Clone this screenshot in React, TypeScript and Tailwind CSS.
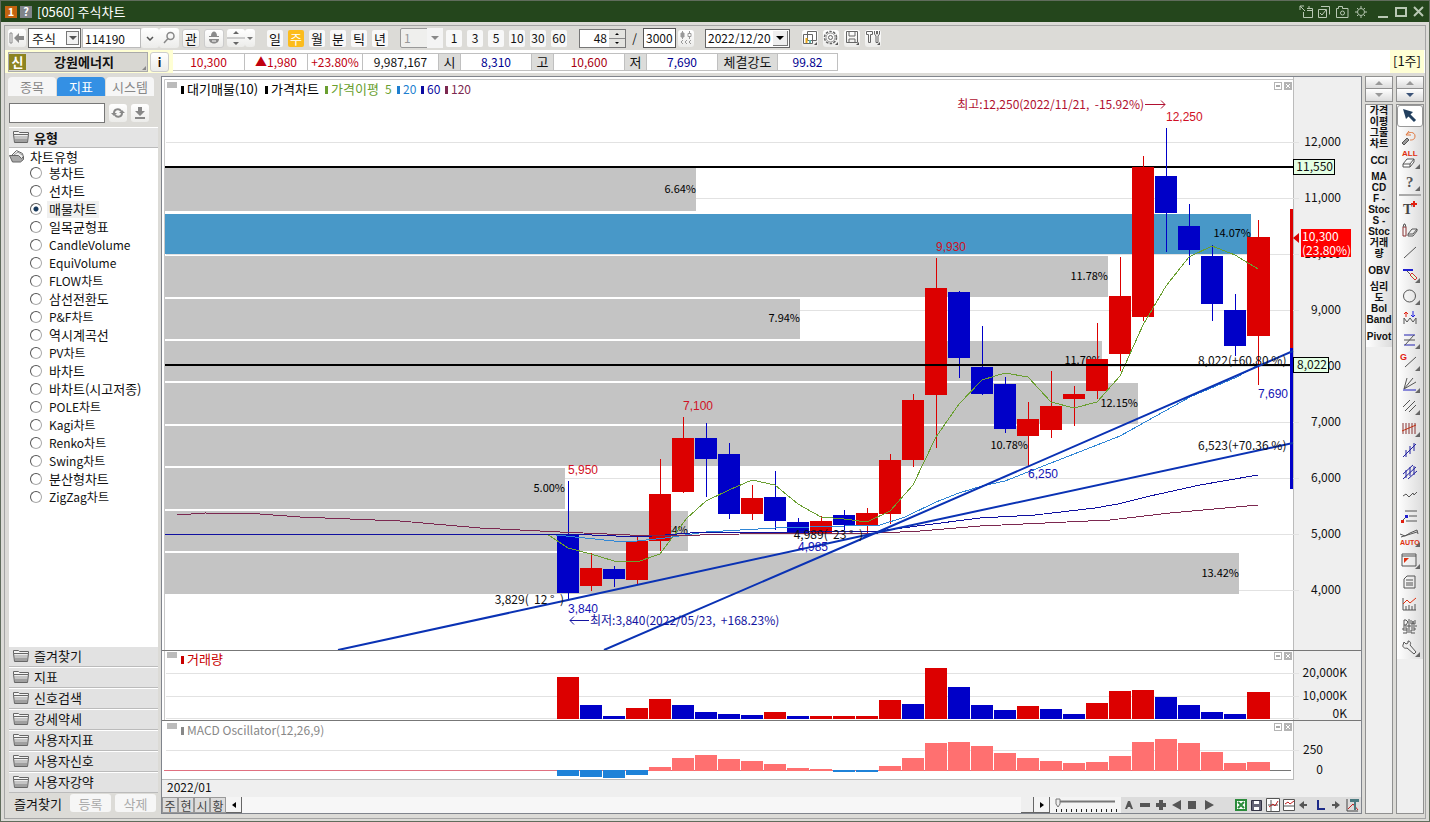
import React, { useState } from 'react';

const RED = '#dc0000';
const BLUE = '#0000c8';

// color, high, body top, body bottom, low, volume color, volume top, macd edge
type Candle = [string, number, number, number, number, string, number, number];

const candles: Candle[] = [
  ['b', 481, 534, 593, 599, 'r', 677, 776],
  ['r', 553, 568, 586, 591, 'b', 705, 777],
  ['b', 566, 569, 579, 587, 'b', 716, 778],
  ['r', 537, 541, 580, 585, 'r', 708, 775],
  ['r', 459, 494, 541, 551, 'r', 699, 767],
  ['r', 417, 438, 492, 493, 'b', 705, 758],
  ['b', 423, 438, 459, 497, 'b', 712, 755],
  ['b', 443, 454, 514, 519, 'b', 714, 759],
  ['r', 485, 498, 514, 520, 'b', 715, 761],
  ['b', 471, 497, 521, 530, 'r', 712, 764],
  ['b', 518, 522, 533, 533, 'b', 716, 768],
  ['r', 516, 521, 533, 533, 'r', 716, 769],
  ['b', 510, 515, 525, 530, 'r', 716, 772],
  ['r', 508, 513, 525, 534, 'r', 716, 772],
  ['r', 454, 460, 514, 524, 'r', 700, 766],
  ['r', 394, 400, 460, 467, 'b', 704, 758],
  ['r', 258, 288, 395, 448, 'r', 668, 743],
  ['b', 291, 292, 358, 378, 'b', 687, 742],
  ['b', 326, 367, 394, 395, 'b', 705, 746],
  ['b', 377, 384, 429, 433, 'b', 710, 753],
  ['r', 402, 419, 436, 466, 'r', 706, 758],
  ['r', 371, 406, 430, 438, 'b', 709, 761],
  ['r', 386, 394, 399, 426, 'b', 714, 763],
  ['r', 323, 359, 391, 399, 'r', 703, 762],
  ['r', 257, 296, 354, 371, 'r', 691, 756],
  ['r', 156, 167, 317, 321, 'r', 690, 742],
  ['b', 128, 176, 213, 252, 'b', 697, 739],
  ['b', 204, 226, 250, 265, 'b', 705, 743],
  ['b', 245, 256, 304, 321, 'b', 712, 752],
  ['b', 294, 310, 346, 356, 'b', 714, 763],
  ['r', 220, 237, 336, 385, 'r', 692, 762],
];

const profile: [number, number, number, string][] = [
  [168, 211, 696, '6.64%'],
  [214, 254, 1251, '14.07%'],
  [256, 297, 1108, '11.78%'],
  [299, 339, 800, '7.94%'],
  [341, 381, 1102, '11.70%'],
  [383, 424, 1138, '12.15%'],
  [426, 466, 1028, '10.78%'],
  [468, 509, 565, '5.00%'],
  [511, 551, 688, '6.54%'],
  [553, 594, 1239, '13.42%'],
];

const averages = [
  {
    color: '#6a9f30',
    points:
      '547,534 568,548 591,554 614,561 637,562 660,554 687,518 706,501 729,490 752,480 775,485 798,504 821,517 844,519 867,522 890,511 913,485 936,437 959,404 982,380 1005,373 1028,377 1051,402 1074,408 1097,402 1120,376 1143,325 1166,286 1189,257 1212,246 1235,255 1258,269',
  },
  {
    color: '#2f86d6',
    points:
      '547,534 575,537 614,541 637,541 665,538 706,532 775,528 845,526 880,525 905,517 936,502 959,493 982,486 1005,481 1028,472 1120,436 1147,421 1190,397 1237,377 1258,365',
  },
  {
    color: '#1010a0',
    points:
      '165,534 568,534 640,537 690,533 798,532 880,531 925,525 980,518 1035,515 1095,508 1118,504 1150,496 1200,485 1258,475',
  },
  {
    color: '#7c2850',
    points:
      '177,515 205,513 260,514 300,517 400,521 480,528 560,532 630,535 700,535 740,534 880,533 920,531 980,526 1110,520 1170,513 1258,505',
  },
];

const chartTypes = [
  '봉차트', '선차트', '매물차트', '일목균형표', 'CandleVolume', 'EquiVolume', 'FLOW차트',
  '삼선전환도', 'P&F차트', '역시계곡선', 'PV차트', '바차트', '바차트(시고저종)', 'POLE차트',
  'Kagi차트', 'Renko차트', 'Swing차트', '분산형차트', 'ZigZag차트',
];

const folders = ['즐겨찾기', '지표', '신호검색', '강세약세', '사용자지표', '사용자신호', '사용자강약'];

const indicators = [
  ['가격', '이평'], ['그물', '차트'], ['CCI'], ['MA', 'CD'], ['F -', 'Stoc'], ['S -', 'Stoc'],
  ['거래', '량'], ['OBV'], ['심리', '도'], ['Bol', 'Band'], ['Pivot'],
];

const fill = (c: string) => (c === 'r' ? RED : BLUE);
const barX = (i: number) => 557 + i * 23;
const barW = (i: number) => (i === candles.length - 1 ? 23 : 22);

const btn = 'flex items-center justify-center rounded-[3px] bg-gradient-to-b from-white to-[#ececea] shrink-0';

function Pane({ top, height, className, controls = 'top-[2px]', children }: {
  top: number; height: number; className: string; controls?: string; children: React.ReactNode;
}) {
  return (
    <div className="relative">
      <svg
        viewBox={`162 ${top} 1199 ${height}`}
        preserveAspectRatio="xMaxYMid slice"
        className={`block w-full ${className}`}
        fontSize="12"
      >
        <rect x="162" y={top} width="1132" height={height} fill="#fff" />
        <rect x="1294" y={top} width="67" height={height} fill="#efefef" />
        <path d={`M1293.5 ${top}v${height}`} stroke="#bbb" />
        {children}
      </svg>
      <div className={`absolute right-[69px] flex gap-[2px] ${controls}`}>
        <button aria-label="최대화" className="flex h-2 w-2 items-center justify-center border border-[#b4b4b4]">
          <span className="h-[2px] w-1 bg-[#aaa]" />
        </button>
        <button aria-label="닫기" className="h-2 w-2 bg-[#b4b4b4]">
          <svg viewBox="0 0 8 8" className="h-2 w-2"><path d="M2 2l4 4M6 2L2 6" stroke="#fff" /></svg>
        </button>
      </div>
    </div>
  );
}

function Legend({ x, y, color, text, size = 13 }: { x: number; y: number; color: string; text: string; size?: number }) {
  return (
    <>
      <rect x={x + 1} y={y - 7} width="3" height="8" fill={color} shapeRendering="crispEdges" />
      <text x={x + 7} y={y + 1} fill={color} fontSize={size}>{text}</text>
    </>
  );
}

function AxisLabel({ y, text, x = 1341 }: { y: number; text: string; x?: number }) {
  return <text x={x} y={y + 4} textAnchor="end" fill="#111">{text}</text>;
}

function PricePane() {
  return (
    <Pane top={77} height={573} className="h-[573px]" controls="top-[5px]">
      <path d="M164.5 650V79.500H1293" stroke="#c8c8c8" fill="none" />
      <rect x="167" y="82" width="10" height="6" fill="#bbb" />
      {[12, 11, 10, 9, 8, 7, 6, 5, 4].map((k) => {
        const y = 142 + (12 - k) * 56;
        return (
          <g key={k}>
            <path d={`M166 ${y + 0.5}H1299`} stroke="#e2e2e2" />
            <AxisLabel y={y} text={`${k},000`} />
          </g>
        );
      })}
      <g shapeRendering="crispEdges">
        {profile.map(([y, bottom, right, label]) => (
          <g key={y}>
            <rect x="165" y={y} width={right - 165} height={bottom - y} fill={y === 214 ? '#4898c8' : '#c4c4c4'} />
            <text x={right} y={Math.round((y + bottom) / 2) + 3} textAnchor="end" fill="#000" fontSize="11">{label}</text>
          </g>
        ))}
        <rect x="165" y="166" width="1128" height="2" fill="#000" />
        {candles.map(([c, high, top, bottom, low], i) => (
          <g key={i} fill={fill(c)}>
            <rect x={barX(i) + 11} y={high} width="1" height={low - high} />
            <rect x={barX(i)} y={top} width={barW(i)} height={bottom - top} />
          </g>
        ))}
        {averages.map((a) => (
          <polyline key={a.color} points={a.points} fill="none" stroke={a.color} />
        ))}
        <rect x="165" y="364" width="1128" height="2" fill="#000" />
        <rect x="1290" y="209" width="3" height="139" fill={RED} />
        <rect x="1290" y="348" width="3" height="141" fill={BLUE} />
      </g>
      <path d="M338 650L568 600L880 532L1293 443M604 650L880 531L1293 351" stroke="#0a32b4" strokeWidth="2" fill="none" />

      <g fill="#111">
        <text x="564" y="604" textAnchor="end">{'3,829(\u00a0 12 ° \u00a0)'}</text>
        <text x="863" y="539" textAnchor="end">{'4,989(\u00a0 23 ° \u00a0)'}</text>
        <text x="1198" y="365">8,022(+60.80 %)</text>
        <text x="1198" y="450">6,523(+70.36 %)</text>
      </g>
      <g fontFamily="Liberation Sans, sans-serif">
        <g fill="#d01024">
          <text x="1166" y="121">12,250</text>
          <text x="936" y="251">9,930</text>
          <text x="683" y="410">7,100</text>
          <text x="568" y="474">5,950</text>
        </g>
        <g fill="#1414b4">
          <text x="568" y="613">3,840</text>
          <text x="798" y="551">4,985</text>
          <text x="1028" y="478">6,250</text>
          <text x="1258" y="398">7,690</text>
        </g>
      </g>
      <text x="1144" y="109" textAnchor="end" fill="#b01030">최고:12,250(2022/11/21,&nbsp; -15.92%)</text>
      <path d="M1145 104.500h20m-4-4l4 4l-4 4" stroke="#b01030" fill="none" />
      <text x="590" y="625" fill="#1414a0">최저:3,840(2022/05/23,&nbsp; +168.23%)</text>
      <path d="M589 620.500h-19m4-4l-4 4l4 4" stroke="#1414a0" fill="none" />

      <Legend x={180} y={93} color="#000" text="대기매물(10)" />
      <Legend x={264} y={93} color="#000" text="가격차트" />
      <Legend x={324} y={93} color="#6a9f30" text="가격이평" />
      <text x="385" y="94" fill="#6a9f30">5</text>
      <Legend x={396} y={93} color="#1e7fd0" text="20" size={12} />
      <Legend x={420} y={93} color="#0a0aa0" text="60" size={12} />
      <Legend x={444} y={93} color="#7c2850" text="120" size={12} />

      <rect x="1293.500" y="159.500" width="41" height="15" fill="#e4ffe4" stroke="#000" />
      <AxisLabel x={1333} y={167} text="11,550" />
      <rect x="1293.500" y="357.500" width="35" height="15" fill="#e4ffe4" stroke="#000" />
      <AxisLabel x={1327} y={365} text="8,022" />
      <path d="M1293 238l6-5v10z" fill={RED} />
      <rect x="1301" y="229" width="50" height="28" fill="#f00" />
      <g fill="#fff">
        <text x="1302" y="241">10,300</text>
        <text x="1302" y="255">(23.80%)</text>
      </g>
    </Pane>
  );
}

function VolumePane() {
  return (
    <Pane top={650} height={70} className="h-[70px]">
      <path d="M162 650.500H1361" stroke="#777" />
      <path d="M166 673.500H1299M166 696.500H1299M166 718.500H1299" stroke="#e2e2e2" />
      <path d="M164.500 651V720" stroke="#c8c8c8" />
      <rect x="167" y="652" width="10" height="6" fill="#bbb" />
      <Legend x={180} y={663} color="#c80000" text="거래량" />
      <g shapeRendering="crispEdges">
        {candles.map((c, i) => (
          <rect key={i} x={barX(i)} y={c[6]} width={barW(i)} height={719 - c[6]} fill={fill(c[5])} />
        ))}
      </g>
      <AxisLabel x={1347} y={673} text="20,000K" />
      <AxisLabel x={1347} y={696} text="10,000K" />
      <AxisLabel x={1347} y={714} text="0K" />
    </Pane>
  );
}

function MacdPane() {
  return (
    <Pane top={720} height={60} className="h-[60px]" controls="top-[3px]">
      <path d="M162 720.500H1361" stroke="#777" />
      <path d="M166 750.500H1299" stroke="#e2e2e2" />
      <path d="M162 779.500H1294" stroke="#bbb" />
      <path d="M164 770.500H1270" stroke="#e07080" />
      <path d="M1270 770.500H1291" stroke="#777" />
      <rect x="167" y="723" width="10" height="6" fill="#bbb" />
      <Legend x={180} y={734} color="#888" text="MACD Oscillator(12,26,9)" size={12} />
      <g shapeRendering="crispEdges">
        {candles.map((c, i) => {
          const down = c[7] > 770;
          return (
            <rect
              key={i}
              x={barX(i)}
              y={down ? 770 : c[7]}
              width={barW(i)}
              height={down ? c[7] - 770 : 771 - c[7]}
              fill={down ? '#1e82d8' : '#ff7070'}
            />
          );
        })}
      </g>
      <AxisLabel x={1323} y={750} text="250" />
      <AxisLabel x={1323} y={770} text="0" />
    </Pane>
  );
}

function Folder({ open = false }: { open?: boolean }) {
  return (
    <svg viewBox="0 0 16 14" className="h-[14px] w-4 shrink-0" stroke="#666">
      {open ? (
        <>
          <path d="M2.500 6.500l5-5l6 3l1 4l-4 4h-7z" fill="#eee" />
          <path d="M5 6l4-3l4 3" fill="none" stroke="#999" />
          <path d="M.5 6.500h9l3 3l2-2v3l-3 2.500h-8z" fill="#a8a8a8" />
        </>
      ) : (
        <>
          <path d="M.5 4.500v-3h5l1 1h9v2" fill="#f4f4f4" />
          <path d="M.5 4.500h15l-1 8h-13z" fill="#c4c4c4" />
          <path d="M2 10.500h12" stroke="#a0a0a0" strokeWidth="3" />
          <path d="M1.500 5.500h13" stroke="#eee" />
        </>
      )}
    </svg>
  );
}

// drawing tools of the right strip, 22 x 20 each; m = has a sub menu
const tools: { name: string; m?: boolean; art: React.ReactNode }[] = [
  { name: '선택', art: <><path d="M8 7l8 8" stroke="#23405f" strokeWidth="3" /><path d="M4 3l10 3l-7 7z" fill="#23405f" stroke="none" /></> },
  { name: '되돌리기', art: <><path d="M3 15l5-5l2 2l-5 5z" fill="#999" /><path d="M7 7l3-4M7 7h5M7 7c3-4 9-3 9 1s-3 4-5 4" stroke="#e07840" /></> },
  { name: '전체지우기', m: true, art: <><text x="3" y="6" fontSize="8" fontWeight="700" fontFamily="Liberation Sans" fill="#e03010" stroke="none">ALL</text><path d="M4 14l4-5h7l-4 5zM4 14v3h7l4-5v-3M11 14v3" fill="#fff" /></> },
  { name: '도움말', m: true, art: <text x="7" y="15" fontSize="15" fontWeight="700" fontFamily="Liberation Serif" fill="#555" stroke="none">?</text> },
  { name: '텍스트', art: <><text x="4" y="16" fontSize="14" fontWeight="700" fontFamily="Liberation Serif" fill="#444" stroke="none">T</text><path d="M15 3v6M12 6h6" stroke="#e02010" strokeWidth="2" /></> },
  { name: '펜지우개', art: <><path d="M4 7h3v9H4z" stroke="#833" /><path d="M4 7l1-3h1l1 3" /><path d="M9 14l4-5h5l-4 5zM9 14v2h5l4-5v-2" fill="#eee" /></> },
  { name: '추세선', art: <path d="M5 16L17 5" /> },
  { name: '선편집', m: true, art: <><path d="M4 6h10" stroke="#2020d0" strokeWidth="2" /><path d="M8 7l4 4" /><path d="M11 11l5 5l2-2l-5-5z" fill="#dfd" stroke="#d03030" /></> },
  { name: '원', m: true, art: <circle cx="10.500" cy="10" r="6" /> },
  { name: '신호', art: <><path d="M5 16v-6l3 4l3-4l3 4l3-4v6" /><path d="M7 9V4M5 6l2-2l2 2" stroke="#e02010" /><path d="M14 3v6M12 7l2 2l2-2" stroke="#2020e0" /></> },
  { name: '파동', m: true, art: <><path d="M5 5h11M5 15h11" stroke="#2020b0" /><path d="M15 5L6 15M5 10h11" /></> },
  { name: '각도', m: true, art: <><text x="1" y="8" fontSize="9" fontWeight="700" fontFamily="Liberation Sans" fill="#e02010" stroke="none">G</text><path d="M6 15L17 5" /></> },
  { name: '팬', m: true, art: <><path d="M5 15L8 4M5 15L14 4M5 15l12-7" /><path d="M4 16h13" stroke="#2020c0" /></> },
  { name: '평행선', m: true, art: <path d="M4 11l7-7M6 15L16 5M10 16l7-7" /> },
  { name: '피보나치', m: true, art: <><path d="M4 5v11M7 5v11M10 5v11M13 5v11M16 5v11" stroke="#833" /><path d="M3 13l14-6" stroke="#c03010" /></> },
  { name: '채널', art: <path d="M4 17L17 4M7 10v7M11 6v8M15 3v8" stroke="#2020a0" /> },
  { name: '이중채널', art: <path d="M4 12L14 3M4 17L17 5M9 17l9-8M7 8v8M11 5v9M15 4v9" stroke="#2020a0" /> },
  { name: '지그재그', art: <path d="M4 12l3-2l3 3l4-4l1 2l3-3" /> },
  { name: '가격선', art: <><path d="M6 5h12M10 10h8M7 15h11M3 15l5-5" /><path d="M2 14h3v3H2z" fill="#e02010" stroke="none" /><path d="M6 9h3v3H6z" fill="#2020d0" stroke="none" /></> },
  { name: '자동추세', m: true, art: <><path d="M1 6l5 2l5-3l7-3l1 4M2 9l16-5" /><text x="1" y="17" fontSize="7" fontWeight="700" fontFamily="Liberation Sans" fill="#e03010" stroke="none">AUTO</text></> },
  { name: '화면', m: true, art: <><path d="M3 4h14v12H3zM3 6h14" /><path d="M5 8h5l-5 5z" fill="#e03010" stroke="none" /></> },
  { name: '메모', art: <path d="M8 4h8v12H5V7zM7 8h7M7 11h7M7 13h7" /> },
  { name: '통계', art: <><path d="M4 4v12h13M7 16v-4M10 16v-5M13 16v-4M16 16v-6" /><path d="M4 10l4-4l3 3l6-5" stroke="#e03010" /></> },
  { name: '일주월', art: <path d="M5 4h2l2 2l-2 3H5zM12 4v4h2V5v3h2V4M4 12h4v5M4 12v2h4M4 17h4M12 12h4v2h-4v3h4M4 10h14M10 3v14" /> },
  { name: '설정', m: true, art: <path d="M5 4l2 2l2-1v-2c3 0 3 3 2 4l6 7l-2 2l-7-6c-2 1-5-1-4-3z" fill="#eee" /> },
];

function ToolIcon({ tool, active }: { tool: (typeof tools)[number]; active?: boolean }) {
  return (
    <button
      aria-label={tool.name}
      className={`flex h-[22px] w-full shrink-0 items-center justify-center ${active ? 'rounded-[3px] border border-[#999] bg-white' : ''}`}
    >
      <svg viewBox="0 0 22 20" className="h-5 w-[22px] shrink-0" stroke="#555" fill="none">
        {tool.art}
        {tool.m && <path d="M21 14v5h-5z" fill="#666" stroke="none" />}
      </svg>
    </button>
  );
}

function Pager({ blue }: { blue?: boolean }) {
  return (
    <div className="mb-[2px] flex flex-col border border-[#909090] bg-[#f4f4f4]">
      <button aria-label="위로" className="flex h-3 items-center justify-center border-b border-[#909090] bg-gradient-to-b from-white to-[#dcdcdc]">
        <svg viewBox="0 0 8 4" className="h-1 w-2"><path d="M0 4l4-4l4 4z" fill="#999" /></svg>
      </button>
      <button aria-label="아래로" className="flex h-3 items-center justify-center bg-gradient-to-b from-white to-[#dcdcdc]">
        <svg viewBox="0 0 8 4" className="h-1 w-2"><path d="M0 0l4 4l4-4z" fill={blue ? '#3c5478' : '#999'} /></svg>
      </button>
    </div>
  );
}

function TitleBar() {
  return (
    <header className="flex h-[21px] shrink-0 items-center bg-[#24461c] px-1 text-white">
      <span className="mr-[3px] flex h-3 w-3 items-center justify-center bg-[#c46410] text-[11px] font-bold">1</span>
      <span className="mr-[5px] flex h-3 w-3 items-center justify-center bg-[#80848a] text-[11px] font-bold">?</span>
      <h1 className="flex-1 pb-px text-[13px]">[0560] 주식차트</h1>
      <svg viewBox="0 0 126 14" className="h-[14px] w-[126px]" fill="none" stroke="#b9c8b4">
        <path d="M1 1l5 5M1 5V1h4M4.500 7v5.500h9v-9H8M8 5.500h5M10 1v3" />
        <path d="M22 1.500h8.500v8M19.500 4.500h8v8h-8zM21 8l2 2l4-5" />
        <path d="M37.500 3.500h2v-2h4v2h5.500v9h-11.500z" /><circle cx="43.500" cy="8" r="2" />
        <circle cx="62" cy="7" r="3.500" /><path d="M62 1v2M62 11v2M56 7h2M66 7h2M58 3l1 1M65 10l1 1M66 3l-1 1M58 11l1-1" />
        <path d="M79 12h10" strokeWidth="2" />
        <path d="M97 3h10v8H97z" strokeWidth="2" />
        <path d="M115 2l9 9M124 2l-9 9" strokeWidth="2" />
      </svg>
    </header>
  );
}

function Toolbar() {
  const [period, setPeriod] = useState('주');
  return (
    <div className="flex h-6 shrink-0 items-center pl-[3px] text-[12px]">
      <button aria-label="처음" className={`${btn} h-[18px] w-[18px]`}>
        <svg viewBox="0 0 16 12" className="h-3 w-4" fill="#8a8a8a"><path d="M1 1h2v10H1z" fill="#fff" stroke="#8a8a8a" /><path d="M5 6l5-5v3h5v4h-5v3z" /></svg>
      </button>
      <div className="relative ml-[2px]">
        <select aria-label="종류" className="block h-5 w-[53px] appearance-none border border-[#666] bg-white pl-[3px] text-[13px] leading-none">
          <option>주식</option>
        </select>
        <span className="pointer-events-none absolute top-[3px] right-[2px] flex h-[14px] w-[13px] items-center justify-center border border-[#777] bg-[#f2f2f2]">
          <svg viewBox="0 0 8 4" className="h-1 w-2"><path d="M0 0l4 4l4-4z" fill="#555" /></svg>
        </span>
      </div>
      <input aria-label="종목코드" defaultValue="114190" className="ml-px h-5 w-[59px] border border-[#bbb] bg-white px-[2px]" />
      <button aria-label="목록" className={`${btn} h-5 w-[18px]`}>
        <svg viewBox="0 0 8 5" className="h-[5px] w-2" fill="none" stroke="#555" strokeWidth="1.500"><path d="M1 1l3 3l3-3" /></svg>
      </button>
      <button aria-label="검색" className={`${btn} h-5 w-5`}>
        <svg viewBox="0 0 14 14" className="h-[14px] w-[14px]" fill="none" stroke="#888" strokeWidth="1.500"><circle cx="8.500" cy="5" r="3.500" /><path d="M6 7.500L2 12" /></svg>
      </button>
      <button className={`${btn} ml-[3px] h-[19px] w-[18px] border border-[#ccc] text-[13px]`}>관</button>
      <button aria-label="관심" className={`${btn} ml-1 h-[19px] w-5 border border-[#ccc]`}>
        <svg viewBox="0 0 14 14" className="h-[14px] w-[14px]" fill="#8a8a8a"><path d="M4 5c0-6 6-6 6 0h2v1H2V5zM2 8h10c0 6-10 6-10 0z" /><path d="M5 10h4" stroke="#fff" /></svg>
      </button>
      <button aria-label="이전 다음" className={`${btn} ml-[3px] h-[18px] w-[18px]`}>
        <svg viewBox="0 0 18 16" className="h-4 w-[18px]" fill="#666"><path d="M6 4l3-3l3 3zM6 12l3 3l3-3z" /><path d="M0 8h18" stroke="#ccc" strokeWidth="2" /></svg>
      </button>
      <button aria-label="더보기" className={`${btn} h-[18px] w-[10px]`}>
        <svg viewBox="0 0 6 3" className="h-[3px] w-[6px]"><path d="M0 0l3 3l3-3z" fill="#777" /></svg>
      </button>
      <div className="ml-3 flex gap-[5px]">
        {['일', '주', '월', '분', '틱', '년'].map((p) => (
          <button
            key={p}
            onClick={() => setPeriod(p)}
            className={`flex h-[17px] w-4 shrink-0 items-center justify-center rounded-[2px] text-[13px] ${p === period ? 'bg-[#fcbc1c] text-white' : 'bg-[#f8f8f8]'}`}
          >
            {p}
          </button>
        ))}
      </div>
      <div className="relative ml-[12px]">
        <select aria-label="분 단위" disabled className="block h-5 w-[43px] appearance-none rounded-[2px] border border-[#999] bg-[#efefed] pl-[3px] text-[12px] text-[#999]">
          <option>1</option>
        </select>
        <span className="pointer-events-none absolute top-0 right-0 flex h-5 w-4 items-center justify-center bg-[#f4f4f4]">
          <svg viewBox="0 0 8 4" className="h-1 w-2"><path d="M0 0l4 4l4-4z" fill="#888" /></svg>
        </span>
      </div>
      <div className="ml-[3px] flex gap-[5px]">
        {['1', '3', '5', '10', '30', '60'].map((n) => (
          <button key={n} className="h-[17px] w-4 shrink-0 rounded-[2px] bg-[#f8f8f8] pb-px">{n}</button>
        ))}
      </div>
      <div className="ml-3 flex h-[19px] w-[47px] border border-[#777] bg-white">
        <input aria-label="표시 개수" defaultValue="48" className="w-[29px] min-w-0 pr-[2px] pb-px text-right" />
        <div className="flex flex-1 flex-col bg-[#e4e4e0]">
          <button aria-label="증가" className="flex flex-1 items-center justify-center border-b border-[#888]"><svg viewBox="0 0 4 2" className="h-[2px] w-1"><path d="M0 2l2-2l2 2z" /></svg></button>
          <button aria-label="감소" className="flex flex-1 items-center justify-center"><svg viewBox="0 0 4 2" className="h-[2px] w-1"><path d="M0 0l2 2l2-2z" /></svg></button>
        </div>
      </div>
      <span className="w-[17px] text-center">/</span>
      <input aria-label="전체 개수" defaultValue="3000" className="h-5 w-[33px] border border-[#555] bg-white pb-px pl-[2px]" />
      <button aria-label="추가 조회" className={`${btn} ml-[2px] h-[17px] w-4`}>
        <svg viewBox="0 0 14 14" className="h-[14px] w-[14px]" fill="none" stroke="#999"><path d="M3.500 0v8M10.500 0v8M4 9l-2 2l2 2M8 9l-2 2l2 2M12 9l-2 2l2 2" /><path d="M2 2h3v4H2z" fill="#999" /><path d="M9 2.500h3v3H9z" fill="#fff" /></svg>
      </button>
      <div className="relative ml-[11px]">
        <select aria-label="날짜" className="block h-[19px] w-[85px] appearance-none border border-[#666] bg-white pb-px pl-[2px]">
          <option>2022/12/20</option>
        </select>
        <span className="pointer-events-none absolute top-[2px] right-[2px] flex h-[15px] w-[15px] items-center justify-center border-r border-b border-[#777] bg-[#efefef]">
          <svg viewBox="0 0 8 4" className="h-1 w-2"><path d="M0 0l4 4l4-4z" /></svg>
        </span>
      </div>
      <div className="ml-3 flex gap-[5px]">
        <button aria-label="차트 추가" className={`${btn} h-[17px] w-4`}>
          <svg viewBox="0 0 16 16" className="h-4 w-4" fill="#fff" stroke="#666"><path d="M5.500 1.500h9v9h-9zM1.500 4.500h9v9h-9z" /><path d="M4.500 13V8" stroke="#e8a818" strokeWidth="2" /><path d="M8 13V10" stroke="#60b8b0" strokeWidth="2" /><path d="M15 12v3h-3z" fill="#555" stroke="none" /></svg>
        </button>
        <button aria-label="환경설정" className={`${btn} h-[17px] w-4`}>
          <svg viewBox="0 0 16 16" className="h-4 w-4" fill="none" stroke="#666"><circle cx="7.500" cy="7.500" r="6" strokeWidth="1.500" strokeDasharray="2.500 1.270" /><circle cx="7.500" cy="7.500" r="4.500" stroke="#999" /><circle cx="7.500" cy="7.500" r="2" /><path d="M15 12v3h-3z" fill="#555" stroke="none" /></svg>
        </button>
        <button aria-label="저장" className={`${btn} h-[17px] w-4`}>
          <svg viewBox="0 0 16 16" className="h-4 w-4" fill="none" stroke="#666"><path d="M2.500 1.500h11v11h-11zM5 2v4h6V2M5 13V9h6v4" /><path d="M15 12v3h-3z" fill="#555" stroke="none" /></svg>
        </button>
        <button aria-label="도구" className={`${btn} h-[17px] w-4`}>
          <svg viewBox="0 0 16 16" className="h-4 w-4" fill="none" stroke="#666"><path d="M1.500 1.500h6v3h-2v8h-2v-8h-2zM9.500 1v3l1.500 2v6.500h2V6l1.500-2V1M11.500 1v3h1V1" /><path d="M15 12v3h-3z" fill="#555" stroke="none" /></svg>
        </button>
      </div>
    </div>
  );
}

function Cell({ w, cls = '', head, children }: { w: string; cls?: string; head?: boolean; children: React.ReactNode }) {
  return (
    <div className={`flex h-[18px] shrink-0 items-center justify-center border border-l-0 border-[#c0c0c0] ${w} ${head ? 'bg-[#dcdcda] text-[13px]' : 'bg-white'} ${cls}`}>
      {children}
    </div>
  );
}

function QuoteRow() {
  return (
    <div className="flex h-[23px] shrink-0 items-center bg-white text-[12px]">
      <div className="flex h-full items-center gap-[2px] bg-[#ffffd4] pl-[3px] pr-[4px]">
        <button className="flex h-5 w-[140px] items-center border border-[#aaa] bg-[#d8d7d2]">
          <span className="flex h-4 w-[17px] items-center justify-center bg-[#8c8420] text-[13px] font-bold text-white">신</span>
          <span className="flex-1 text-center text-[13px] font-bold">강원에너지</span>
          <svg viewBox="0 0 4 4" className="mr-px mb-px h-1 w-1 self-end"><path d="M4 0v4H0z" fill="#888" /></svg>
        </button>
        <button className={`${btn} h-5 w-[19px] border border-[#ccc] font-bold`}>i</button>
      </div>
      <div className="flex flex-1">
        <Cell w="w-[72px]" cls="border-l text-[#c00010]">10,300</Cell>
        <Cell w="w-[63px]" cls="text-[#c00010]">▲1,980</Cell>
        <Cell w="w-[55px]" cls="text-[#c00010]">+23.80%</Cell>
        <Cell w="w-[76px]">9,987,167</Cell>
        <Cell w="w-[22px]" head>시</Cell>
        <Cell w="w-[71px]" cls="text-[#000090]">8,310</Cell>
        <Cell w="w-[22px]" head>고</Cell>
        <Cell w="w-[71px]" cls="text-[#a80010]">10,600</Cell>
        <Cell w="w-[22px]" head>저</Cell>
        <Cell w="w-[71px]" cls="text-[#000090]">7,690</Cell>
        <Cell w="w-[60px]" head>체결강도</Cell>
        <Cell w="w-[60px]" cls="text-[#000090]">99.82</Cell>
      </div>
      <span className="mr-px h-full w-[34px] bg-[#ffffd4] pt-1 text-center text-[13px]">[1주]</span>
    </div>
  );
}

function Sidebar() {
  const [type, setType] = useState('매물차트');
  return (
    <aside className="flex w-[152px] shrink-0 flex-col pr-[2px] text-[13px]">
      <nav className="flex h-5 gap-px pr-1 pt-px text-[#888]">
        <button className="flex-1 rounded-t-[4px] bg-[#f6f6f6] pb-px">종목</button>
        <button className="flex-1 rounded-t-[4px] bg-[#3490e4] pb-px text-white">지표</button>
        <button className="flex-1 rounded-t-[4px] bg-[#f6f6f6] pb-px">시스템</button>
      </nav>
      <div className="mt-[7px] flex h-5 items-center gap-1 pl-px">
        <input aria-label="지표 검색" className="h-5 w-24 border border-[#777] bg-white px-1" />
        <button aria-label="새로고침" className={`${btn} h-[18px] w-[18px]`}>
          <svg viewBox="0 0 14 14" className="h-[14px] w-[14px]" fill="none" stroke="#888" strokeWidth="2"><path d="M3 7c0-4 5-5 7-2M11 7c0 4-5 5-7 2" /><path d="M0 7h6l-3 3zM8 7h6l-3-3z" fill="#888" stroke="none" /></svg>
        </button>
        <button aria-label="내려받기" className={`${btn} h-[18px] w-[18px]`}>
          <svg viewBox="0 0 14 14" className="h-[14px] w-[14px]" fill="#888"><path d="M5 1h4v4h3l-5 5l-5-5h3zM2 11h10v2H2z" /></svg>
        </button>
      </div>
      <button className="mt-1 ml-px flex h-[21px] shrink-0 items-center gap-[5px] border-t border-b border-t-white border-b-[#bbb] bg-[#e4e4e4] pb-px pl-1 font-bold">
        <Folder />
        유형
      </button>
      <div role="radiogroup" aria-label="차트유형" className="ml-px flex-1 bg-white">
        <div className="flex h-4 items-center gap-[5px]">
          <Folder open />
          차트유형
        </div>
        {chartTypes.map((t) => (
          <label key={t} className="flex h-[18px] items-center gap-[5px] pl-[21px]">
            <input
              type="radio"
              name="chart-type"
              checked={t === type}
              onChange={() => setType(t)}
              className="h-3 w-3 shrink-0 appearance-none rounded-full border border-[#555] border-r-[#aaa] border-b-[#aaa] bg-white checked:bg-[radial-gradient(circle,#17395c_0_2px,#fff_3px)]"
            />
            <span
              className={`px-[2px] pb-px leading-4 ${t === type ? 'bg-[#f0f0f0]' : ''} ${/^[A-Z]/.test(t) ? 'text-[12px]' : ''}`}
            >
              {t}
            </span>
          </label>
        ))}
      </div>
      {folders.map((f) => (
        <button key={f} className="ml-px flex h-[21px] shrink-0 items-center gap-[5px] border-t border-b border-t-white border-b-[#bbb] bg-[#e2e2e2] pb-[2px] pl-1">
          <Folder />
          {f}
        </button>
      ))}
      <div className="flex h-[21px] shrink-0 items-center gap-1 pr-[2px] pb-px pl-[6px]">
        <button className="flex-1 text-left">즐겨찾기</button>
        <button disabled className="h-[18px] w-[41px] rounded-[3px] bg-[#f6f6f6] text-[#aaa]">등록</button>
        <button disabled className="h-[18px] w-[41px] rounded-[3px] bg-[#f6f6f6] text-[#aaa]">삭제</button>
      </div>
    </aside>
  );
}

function BottomBar() {
  return (
    <div className="flex h-4 shrink-0 items-center bg-[#dcdcdc]">
      {['주', '현', '시', '황'].map((t) => (
        <button key={t} className="h-4 w-4 shrink-0 border border-[#999] bg-[#dcdcdc] text-[12px] leading-[13px] text-[#444]">{t}</button>
      ))}
      <button aria-label="왼쪽" className="flex h-4 w-4 shrink-0 items-center justify-center border-r border-b border-[#666] bg-[#f4f4f4]">
        <svg viewBox="0 0 4 6" className="h-[6px] w-1"><path d="M4 0v6L0 3z" /></svg>
      </button>
      <div className="flex h-full flex-1 justify-end bg-[#f7f7f7]">
        <span className="h-4 w-[13px] border-r border-b border-[#666] bg-[#efefef]" />
      </div>
      <button aria-label="오른쪽" className="flex h-4 w-4 shrink-0 items-center justify-center border-r border-b border-[#666] bg-[#f4f4f4]">
        <svg viewBox="0 0 4 6" className="h-[6px] w-1"><path d="M0 0v6l4-3z" /></svg>
      </button>
      <svg viewBox="0 0 71 16" className="h-4 w-[71px] shrink-0" fill="none">
        <path d="M0 0h71v16H0z" fill="#f4f4f4" />
        <path d="M8 4.500h57" stroke="#777" strokeWidth="2" />
        <path d="M6 2h4v5l-2 3l-2-3z" fill="#eee" stroke="#777" />
        <path d="M6 13.500h62" stroke="#222" strokeWidth="3" strokeDasharray="1 4" />
      </svg>
      <svg viewBox="0 0 240 16" className="h-4 w-60 shrink-0" fill="#555">
        <path d="M4 12l3-8h2l3 8h-2l-1-2H7l-1 2zM7.500 8h1" />
        <path d="M19 6h10v4h-10zM38 3h4v3h3v4h-3v3h-4v-3h-3V6h3zM60 3v10l-9-5zM67 4h8v8h-8zM84 3v10l9-5z" />
        <path d="M115 3h10v10h-10z" fill="#fff" stroke="#2c8c3c" strokeWidth="2" /><path d="M117 5l6 6M123 5l-6 6" stroke="#2c8c3c" strokeWidth="2" />
        <path d="M130.500 3.500h10v10h-10z" fill="#667" stroke="#334" /><path d="M133 4h5v3h-5zM133 10h5v3h-5z" fill="#fff" />
        <path d="M145.500 1.500h13v13h-13z" fill="#fff" stroke="#555" /><path d="M147 8h10M150 3v11" stroke="#555" /><path d="M148 10l4-3l2 2l3-5" stroke="#c02020" fill="none" />
        <path d="M162.500 2.500h11v11h-11z" fill="#fff" stroke="#555" /><path d="M163 9h10" stroke="#555" /><path d="M164 7l3-2l2 2l4-3" stroke="#c02020" fill="none" />
        <path d="M178 8l5-4v3h3v2h-3v3zM219 8l-5-4v3h-3v2h3v3z" />
        <path d="M197 3v9h7" fill="none" stroke="#1c2a88" strokeWidth="2" />
        <path d="M226 2v12h11" fill="none" stroke="#444" /><path d="M227 12l5-5l5 6" fill="none" stroke="#c02020" /><path d="M229 2h9v3h-3v8h-2V5h-4z" fill="#4a7a80" />
      </svg>
    </div>
  );
}

export default function App() {
  return (
    <div className="flex min-h-screen flex-col border border-[#606c5c] bg-[#dcdbd7] font-['Noto_Sans_CJK_KR','Noto_Sans',sans-serif] leading-none text-[#111]">
      <TitleBar />
      <div className="mx-[3px] mt-[3px] mb-[2px] flex flex-1 flex-col border border-[#a4a4a4]">
        <Toolbar />
        <QuoteRow />
        <main className="mt-[3px] mb-1 flex flex-1 pl-[3px] pr-px">
          <Sidebar />
          <section className="ml-px min-w-0 flex-1 border border-[#80848c] bg-[#efefef]">
            <PricePane />
            <VolumePane />
            <MacdPane />
            <div className="flex h-[17px] items-center pb-[3px] pl-[5px] text-[12px]">2022/01</div>
            <BottomBar />
          </section>
          <div className="ml-[3px] flex w-7 shrink-0 flex-col">
            <Pager />
            <div className="flex flex-1 flex-col border border-[#909090] bg-[#efefef]">
              {indicators.map((lines) => (
                <button
                  key={lines.join()}
                  className="flex h-[22px] shrink-0 flex-col items-center justify-center bg-gradient-to-r from-white to-[#dcdcdc] font-['Liberation_Sans','Noto_Sans_CJK_KR',sans-serif] text-[10px] leading-[11px] font-bold whitespace-nowrap"
                >
                  {lines.map((l) => <span key={l}>{l}</span>)}
                </button>
              ))}
            </div>
          </div>
          <div className="ml-[3px] flex w-7 shrink-0 flex-col">
            <Pager blue />
            <div className="flex flex-1 flex-col border border-[#909090] bg-[#efefef]">
              <div className="flex flex-col bg-gradient-to-r from-white to-[#dcdcdc]">
                {tools.slice(0, 4).map((t, i) => <ToolIcon key={t.name} tool={t} active={i === 0} />)}
                <hr className="mx-[2px] my-[1px] border-t-2 border-[#aaa]" />
                {tools.slice(4).map((t) => <ToolIcon key={t.name} tool={t} />)}
              </div>
            </div>
          </div>
        </main>
      </div>
    </div>
  );
}
